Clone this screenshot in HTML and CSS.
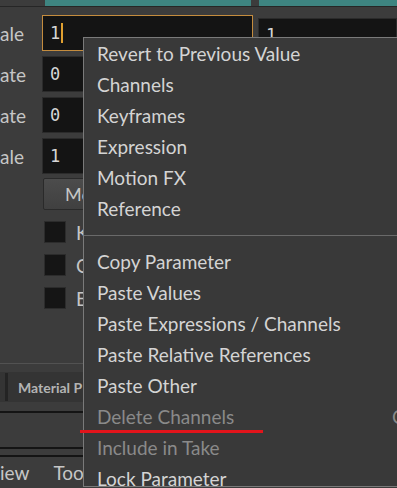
FILE: index.html
```html
<!DOCTYPE html>
<html lang="en">
<head>
    <meta charset="UTF-8">
    <meta name="viewport" content="width=device-width, initial-scale=1.0">
    <title>Parameter Menu</title>
    <link rel="stylesheet" href="styles.css">
</head>
<body>
    <div class="panel">
        <div class="topbar">
            <div class="teal wide"></div>
            <div class="teal rest"></div>
        </div>

        <div class="params">
            <div class="row">
                <div class="label">ale</div>
                <div class="field active">1<span class="cursor"></span></div>
                <div class="field side">1</div>
            </div>
            <div class="row">
                <div class="label">ate</div>
                <div class="field">0</div>
            </div>
            <div class="row">
                <div class="label">ate</div>
                <div class="field">0</div>
            </div>
            <div class="row">
                <div class="label">ale</div>
                <div class="field">1</div>
            </div>
            <div class="row btnrow">
                <div class="label"></div>
                <button class="btn">Mo</button>
            </div>
            <div class="row check">
                <div class="label"></div>
                <span class="box"></span><span class="ctext">K</span>
            </div>
            <div class="row check">
                <div class="label"></div>
                <span class="box"></span><span class="ctext">C</span>
            </div>
            <div class="row check">
                <div class="label"></div>
                <span class="box"></span><span class="ctext">E</span>
            </div>
        </div>

        <div class="bottom">
            <div class="tabbar">
                <span class="tabsep"></span>
                <span class="tab">Material P</span>
            </div>
            <div class="pane"></div>
            <div class="toolbar">
                <span class="tool">iew</span>
                <span class="tool">Too</span>
            </div>
        </div>
    </div>

    <div class="menu">
        <div class="item">Revert to Previous Value</div>
        <div class="item">Channels</div>
        <div class="item">Keyframes</div>
        <div class="item">Expression</div>
        <div class="item">Motion FX</div>
        <div class="item">Reference</div>
        <div class="sep"></div>
        <div class="item">Copy Parameter</div>
        <div class="item">Paste Values</div>
        <div class="item">Paste Expressions / Channels</div>
        <div class="item">Paste Relative References</div>
        <div class="item">Paste Other</div>
        <div class="item off"><span class="name">Delete Channels</span><span class="key">C</span></div>
        <div class="item off">Include in Take</div>
        <div class="item">Lock Parameter</div>
    </div>

    <div class="mark"></div>
</body>
</html>
```

FILE: styles.css
```css
body { margin: 0; width: 397px; height: 488px; overflow: hidden; background: #3c3c3c; font-family: Lato, "Noto Sans", sans-serif; color: #cfcfcf; position: relative; }
.panel { height: 488px; display: flex; flex-direction: column; }

.topbar { display: flex; height: 6px; padding-left: 45px; border-bottom: 1px solid #262626; }
.teal { background: #3e8581; height: 6px; }
.teal.wide { width: 206px; }
.teal.rest { flex: 1; margin-left: 8px; }

.params { display: flex; flex-direction: column; gap: 5px; padding-top: 8px; }
.row { display: flex; align-items: center; height: 36px; }
.label { width: 42px; flex: none; font-size: 19px; color: #c6c6c6; }
.field { width: 211px; height: 36px; box-sizing: border-box; background: #141414; border: 1px solid #2b2b2b; font-family: "DejaVu Sans Mono", monospace; font-size: 17px; color: #d6d6d6; padding-left: 7px; display: flex; align-items: center; }
.field.active { border: 1px solid #c48c3e; }
.field.side { flex: 1; margin-left: 5px; height: 33px; align-self: flex-end; }
.cursor { display: inline-block; width: 2px; height: 20px; background: #e0a030; margin-left: 1px; }

.btnrow { height: 32px; margin-top: -1px; }
.btn { width: 160px; height: 32px; margin-left: 1px; background: linear-gradient(#4c4c4c, #404040); border: 1px solid #2a2a2a; border-radius: 2px; color: #c6c6c6; font-family: Lato, sans-serif; font-size: 18px; text-align: left; padding-left: 21px; }
.check { height: 28px; }
.btnrow + .check { margin-top: 3px; }
.box { width: 20px; height: 20px; margin-left: 2px; background: #151515; border: 1px solid #2c2c2c; }
.ctext { margin-left: 10px; font-size: 19px; color: #c6c6c6; }

.bottom { margin-top: auto; border-top: 1px solid #525252; padding-top: 8px; }
.tabbar { height: 30px; background: #343434; display: flex; align-items: center; }
.tabsep { width: 3px; height: 28px; margin-left: 5px; background: #242424; }
.tab { margin-left: 10px; font-size: 14px; font-weight: bold; color: #b3b3b3; }
.pane { margin-top: 9px; height: 34px; border-top: 2px solid #141414; border-bottom: 2px solid #141414; }
.toolbar { margin-top: 6px; border-top: 2px solid #141414; height: 31px; display: flex; align-items: center; gap: 24px; }
.tool { font-size: 19px; color: #c6c6c6; }

.menu { position: absolute; left: 83px; top: 37px; width: 330px; height: 448px; background: #393939; border: 1px solid #7a7a7a; overflow: hidden; }
.item { height: 31px; line-height: 31px; padding-left: 13px; font-size: 19px; color: #d4d4d4; display: grid; grid-template-columns: 295px auto; white-space: nowrap; }
.item.off { color: #8a8a8a; }
.key { color: #8a8a8a; }
.sep { height: 11px; border-bottom: 1px solid #6a6a6a; margin-bottom: 10px; }

.mark { position: absolute; left: 80px; top: 430px; width: 183px; height: 3px; background: #e3141b; }
```
